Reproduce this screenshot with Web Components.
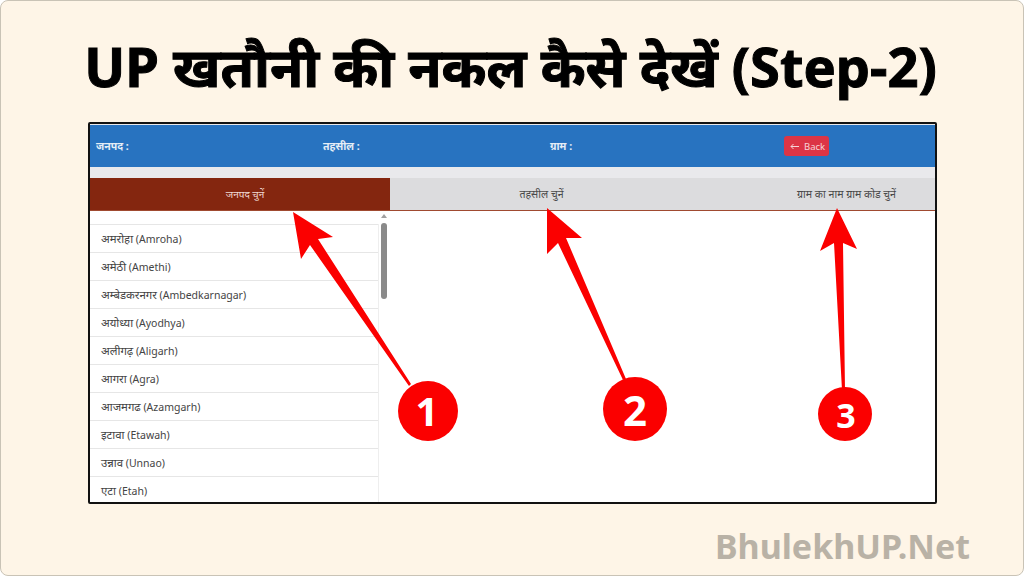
<!DOCTYPE html>
<html>
<head>
<meta charset="utf-8">
<title>BhulekhUP</title>
<style>
    html, body { margin: 0; padding: 0; width: 1024px; height: 576px; overflow: hidden; }
    body { font-family: "Noto Sans", "Liberation Sans", sans-serif; }
</style>
</head>
<body>
<promo-slide>
    <span slot="title">UP खतौनी की नकल कैसे देखें (Step-2)</span>
    <app-frame>
        <top-bar></top-bar>
        <step-tabs></step-tabs>
        <district-list></district-list>
        <step-arrows></step-arrows>
    </app-frame>
    <span slot="brand">BhulekhUP.Net</span>
</promo-slide>

<script>
class PromoSlide extends HTMLElement {
    constructor() {
        super();
        this.attachShadow({ mode: 'open' });
        this.shadowRoot.innerHTML = `
        <style>
            :host {
                display: flex;
                flex-direction: column;
                box-sizing: border-box;
                width: 1024px;
                height: 576px;
                background: #fef5e7;
                border: 1px solid #c9c3b6;
                border-radius: 8px;
                overflow: hidden;
                color: #000;
            }
            h1 {
                margin: 0;
                height: 121px;
                padding-top: 29px;
                padding-right: 3px;
                box-sizing: border-box;
                text-align: center;
                font: 700 54.2px/72px "Noto Sans", "Liberation Sans", sans-serif;
                -webkit-text-stroke: 1px #000;
                white-space: nowrap;
            }
            .brand {
                align-self: flex-end;
                margin: 20px 53px 0 0;
                color: #b9b2a6;
                font: 700 34px/44px "Noto Sans", "Liberation Sans", sans-serif;
            }
        </style>
        <h1><slot name="title"></slot></h1>
        <slot></slot>
        <div class="brand"><slot name="brand"></slot></div>
        `;
    }
}

class AppFrame extends HTMLElement {
    constructor() {
        super();
        this.attachShadow({ mode: 'open' });
        this.shadowRoot.innerHTML = `
        <style>
            :host {
                display: block;
                position: relative;
                box-sizing: border-box;
                width: 849px;
                height: 382px;
                margin-left: 87px;
                background: #fff;
                border: 2px solid #111;
                border-radius: 2px;
                overflow: hidden;
                font-family: "Noto Sans", "Liberation Sans", sans-serif;
            }
        </style>
        <slot></slot>
        `;
    }
}

class TopBar extends HTMLElement {
    constructor() {
        super();
        this.attachShadow({ mode: 'open' });
        this.shadowRoot.innerHTML = `
        <style>
            :host {
                display: block;
                background: #e9e9ec;
                padding: 1px 0 11px;
            }
            .bar {
                display: grid;
                grid-template-columns: 227px 227px 234px auto;
                align-items: center;
                justify-content: start;
                height: 42px;
                padding-left: 6px;
                background: #2873c0;
                color: #e4edf6;
                font-size: 10.5px;
                font-weight: 700;
            }
            button {
                display: flex;
                align-items: center;
                gap: 5px;
                width: 45px;
                height: 20px;
                padding: 0 0 0 6px;
                border: 0;
                border-radius: 3px;
                background: #dc3545;
                color: #f6d5d8;
                font: 400 9.5px "Noto Sans", "Liberation Sans", sans-serif;
            }
            svg { width: 9px; height: 7px; }
        </style>
        <div class="bar">
            <span>जनपद :</span>
            <span>तहसील :</span>
            <span>ग्राम :</span>
            <button>
                <svg viewBox="0 0 9 7" fill="none" stroke="#f6d5d8" stroke-width="1"><path d="M9 3.5H1M3.5 1 1 3.5 3.5 6"/></svg>
                Back
            </button>
        </div>
        `;
    }
}

class StepTabs extends HTMLElement {
    constructor() {
        super();
        this.attachShadow({ mode: 'open' });
        this.shadowRoot.innerHTML = `
        <style>
            :host {
                display: grid;
                grid-template-columns: 300px 303px 307px;
                height: 33px;
                box-sizing: border-box;
                border-bottom: 1px solid #a04a30;
                background: #dcdcde;
                color: #4a4a4a;
                font-size: 10.6px;
            }
            div {
                display: flex;
                align-items: center;
                justify-content: center;
            }
            .active { background: #84260f; color: #f1dcd5; font-size: 10px; padding-left: 10px; }
        </style>
        <div class="active">जनपद चुनें</div>
        <div>तहसील चुनें</div>
        <div>ग्राम का नाम ग्राम कोड चुनें</div>
        `;
    }
}

class DistrictList extends HTMLElement {
    static get districts() {
        return [['अमरोहा', 'Amroha'], ['अमेठी', 'Amethi'], ['अम्बेडकरनगर', 'Ambedkarnagar'], ['अयोध्या', 'Ayodhya'], ['अलीगढ़', 'Aligarh'],
            ['आगरा', 'Agra'], ['आजमगढ', 'Azamgarh'], ['इटावा', 'Etawah'], ['उन्नाव', 'Unnao'], ['एटा', 'Etah']];
    }

    constructor() {
        super();
        this.attachShadow({ mode: 'open' });
        // hindi runs a bit bigger than the latin name in the original
        const rows = DistrictList.districts.map(([hi, en]) => `<li><span class="hi">${hi}</span> (${en})</li>`).join('');
        this.shadowRoot.innerHTML = `
        <style>
            :host {
                display: grid;
                grid-template-columns: 289px 10px;
                height: 291px;
                padding-top: 13px;
                box-sizing: border-box;
                overflow: hidden;
                color: #444;
                font-size: 10.5px;
            }
            ul {
                margin: 0;
                padding: 0;
                list-style: none;
                border-right: 1px solid #eee;
            }
            li {
                height: 28px;
                line-height: 27px;
                box-sizing: border-box;
                padding-left: 11px;
                border-top: 1px solid #e6e6e6;
            }
            .hi { font-size: 11.4px; }
            .scroll {
                display: flex;
                flex-direction: column;
                align-items: center;
                margin-top: -10px;
            }
            .up {
                width: 0;
                height: 0;
                border: 3px solid transparent;
                border-top: 0;
                border-bottom: 4px solid #a0a0a0;
                margin-bottom: 5px;
            }
            .thumb {
                width: 6px;
                height: 76px;
                border-radius: 3px;
                background: #8a8a8a;
            }
        </style>
        <ul>${rows}</ul>
        <div class="scroll"><div class="up"></div><div class="thumb"></div></div>
        `;
    }
}

class StepArrows extends HTMLElement {
    constructor() {
        super();
        this.attachShadow({ mode: 'open' });
        // viewBox is the frame's inner box in page coordinates, so the points read as page pixels
        this.shadowRoot.innerHTML = `
        <style>
            :host {
                display: block;
                position: absolute;
                inset: 0;
                pointer-events: none;
            }
            svg { position: absolute; inset: 0; width: 100%; height: 100%; }
            text { font: 700 40px "Noto Sans", "Liberation Sans", sans-serif; fill: #fff; text-anchor: middle; }
        </style>
        <svg viewBox="90 124 845 378" preserveAspectRatio="none">
            <g fill="#fb0000">
                <path d="M293 212 333 237 318 239 411 384 409 386 310 245 301 259Z"/>
                <path d="M547 208 582 238 566 238 626 379 623 380 558 243 547 254Z"/>
                <path d="M837 208 857 249 843 243 845 390 842 390 834 243 820 251Z"/>
                <circle cx="428" cy="411" r="30"/>
                <circle cx="635" cy="409" r="32"/>
                <circle cx="845" cy="414" r="27"/>
            </g>
            <text x="427" y="426">1</text>
            <text x="635" y="426" style="font-size:42px">2</text>
            <text x="846" y="428" style="font-size:34px">3</text>
        </svg>
        `;
    }
}

customElements.define('promo-slide', PromoSlide);
customElements.define('app-frame', AppFrame);
customElements.define('top-bar', TopBar);
customElements.define('step-tabs', StepTabs);
customElements.define('district-list', DistrictList);
customElements.define('step-arrows', StepArrows);
</script>
</body>
</html>
